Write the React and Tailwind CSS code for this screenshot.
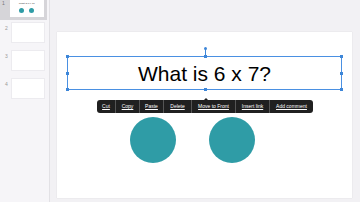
import React from "react";

const font = { fontFamily: '"Liberation Sans", Arial, sans-serif' };

function Handle({ className }) {
  return <div className={"absolute w-[3px] h-[3px] bg-[#3d86d8] " + className} />;
}

export default function App() {
  const tools = [
    ["Cut", "w-[18px]"],
    ["Copy", "w-[24px]"],
    ["Paste", "w-[24px]"],
    ["Delete", "w-[28px]"],
    ["Move to Front", "w-[44px]"],
    ["Insert link", "w-[34px]"],
    ["Add comment", "w-[44px]"],
  ];
  return (
    <div className="flex w-[360px] h-[202px] overflow-hidden bg-[#f2f1f4]" style={font}>
      {/* Sidebar */}
      <div className="w-[50px] h-full bg-[#f6f5f8] border-r border-[#e2e1e5] flex flex-col">
        <div className="flex items-start h-[20px] w-[47px] bg-[#d6d5d9] shrink-0 pl-[2px] gap-[5px]">
          <span className="text-[5px] leading-[6px] text-[#777]">1</span>
          <div className="-mt-[3px] w-[34px] h-[20px] bg-white flex flex-col items-center">
            <span className="text-[2.5px] leading-[3px] mt-[5px] text-[#333] whitespace-nowrap">What is 6 x 7?</span>
            <div className="flex gap-[5px] mt-[3px]">
              <div className="w-[5px] h-[5px] rounded-full bg-[#2f9ca6]" />
              <div className="w-[5px] h-[5px] rounded-full bg-[#2f9ca6]" />
            </div>
          </div>
        </div>
        {[2, 3, 4].map((n) => (
          <div key={n} className="flex items-start h-[28px] shrink-0 pl-[5px] pt-[2px] gap-[3px]">
            <span className="text-[5px] leading-[6px] text-[#999] mt-[3px]">{n}</span>
            <div className="w-[34px] h-[21px] bg-white border border-[#ecebef]" />
          </div>
        ))}
      </div>
      {/* Main */}
      <div className="flex-1 pl-[7px] pt-[32px] pr-[8px]">
        <div className="relative w-[295px] h-[166px] bg-white shadow-[0_0_1px_rgba(0,0,0,0.15)] flex flex-col pt-[24px] px-[10px]">
          {/* rotation handle */}
          <div className="absolute left-[146.5px] top-[15px] w-[3px] h-[3px] rounded-full bg-[#3d86d8]" />
          <div className="absolute left-[147.5px] top-[17px] w-px h-[7px] bg-[#3d86d8]" />
          {/* textbox */}
          <div className="relative h-[34px] border border-[#4a90e2] flex items-center justify-center">
            <span className="text-[21px] leading-none text-black">What is 6 x 7?</span>
            <Handle className="left-[-2px] top-[-2px]" />
            <Handle className="left-[135.5px] top-[-2px]" />
            <Handle className="right-[-2px] top-[-2px]" />
            <Handle className="left-[-2px] top-[14.5px]" />
            <Handle className="right-[-2px] top-[14.5px]" />
            <Handle className="left-[-2px] bottom-[-2px]" />
            <Handle className="left-[135.5px] bottom-[-2px]" />
            <Handle className="right-[-2px] bottom-[-2px]" />
          </div>
          {/* circles */}
          <div className="flex gap-[33px] mt-[27px] pl-[63px]">
            <div className="w-[46px] h-[46px] rounded-full bg-[#2f9ca6]" />
            <div className="w-[46px] h-[46px] rounded-full bg-[#2f9ca6]" />
          </div>
          {/* toolbar (floating menu) */}
          <div className="absolute left-[40px] top-[68px] h-[13px] flex bg-[#202020] rounded-[3px]">
            <div className="absolute left-[107px] top-[-2px] w-0 h-0 border-l-[2px] border-r-[2px] border-b-[2px] border-l-transparent border-r-transparent border-b-[#202020]" />
            {tools.map(([t, w], i) => (
              <div
                key={t}
                className={
                  w +
                  " h-full flex items-center justify-center text-[5px] text-white underline whitespace-nowrap " +
                  (i > 0 ? "border-l border-[#555]" : "")
                }
              >
                {t}
              </div>
            ))}
          </div>
        </div>
      </div>
    </div>
  );
}
